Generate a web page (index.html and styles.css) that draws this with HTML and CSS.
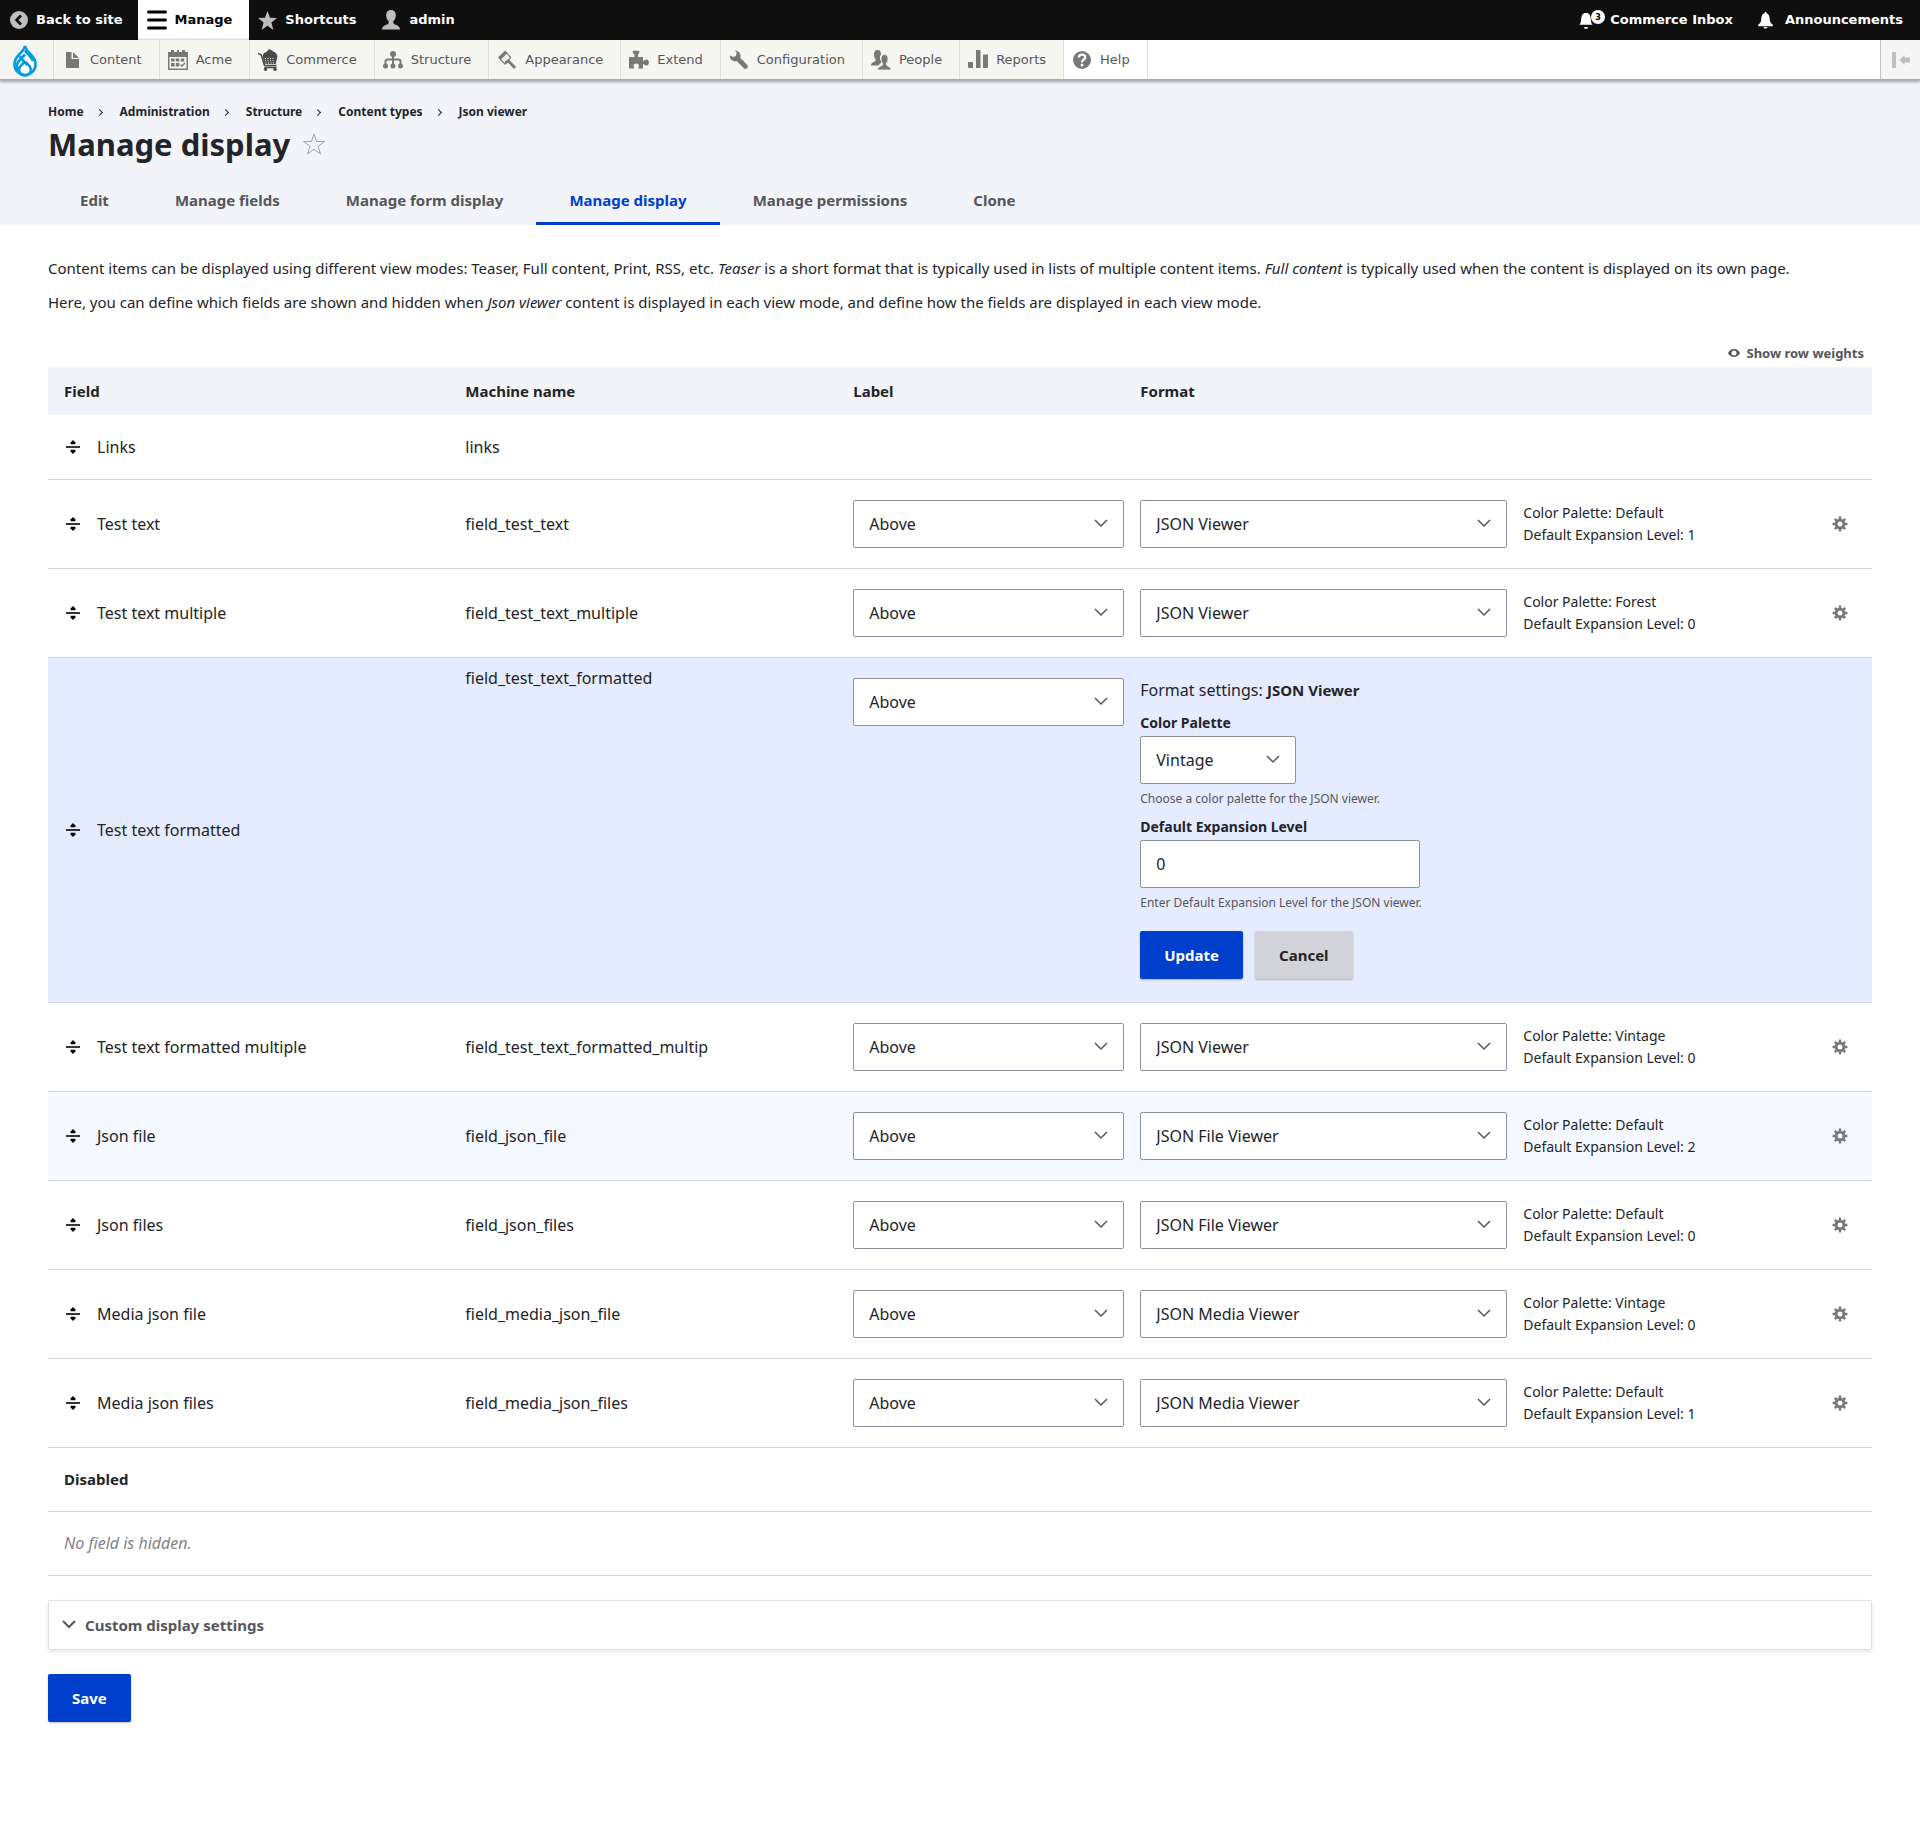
FILE: index.html
```html
<!DOCTYPE html>
<html lang="en">
<head>
<meta charset="utf-8">
<title>Manage display</title>
<link rel="stylesheet" href="styles.css">
</head>
<body>
<svg class="sprite" aria-hidden="true">
  <symbol id="drag" viewBox="0 0 14 14"><path d="M7 0l3.200 3.200h-1v1H4.800v-1h-1zM7 14l3.200-3.200h-1v-1H4.800v1h-1z" fill="#000"/><path d="M0 7h14" stroke="#333" stroke-width="2"/></symbol>
  <symbol id="gear" viewBox="0 0 16 16"><g stroke="#76777b" stroke-width="2.400"><path d="M8 .6v3M8 12.400v3M.6 8h3M12.400 8h3M2.800 2.800l2 2M11.200 11.200l2 2M2.800 13.200l2-2M11.200 4.800l2-2"/></g><circle cx="8" cy="8" r="3.900" fill="none" stroke="#76777b" stroke-width="2.800"/></symbol>
</svg>

<nav class="bar" aria-label="Toolbar">
  <a class="bar-item back" href="#"><svg width="18" height="18" viewBox="0 0 18 18"><circle cx="9" cy="9" r="9" fill="#bebebe"/><path d="M11 4.500L6.500 9l4.500 4.500" fill="none" stroke="#0f0f0f" stroke-width="2.600"/></svg>Back to site</a>
  <a class="bar-item manage" href="#"><svg width="20" height="20" viewBox="0 0 20 20"><path d="M1.500 2h17M1.500 10h17M1.500 18h17" stroke="#000" stroke-width="3" stroke-linecap="round"/></svg>Manage</a>
  <a class="bar-item" href="#"><svg width="19" height="19" viewBox="0 0 19 19"><path d="M9.500 0l2.500 6.800 7 .2-5.600 4.400L15.400 19l-5.900-4.200L3.600 19l2-7.600L0 7l7-.2z" fill="#bebebe"/></svg>Shortcuts</a>
  <a class="bar-item" href="#"><svg width="20" height="20" viewBox="0 0 20 20"><path d="M10 0c3.400 0 4.800 2.300 4.800 5.400 0 2.700-1 4.300-2.200 5.600-.7.900-.5 2.400.5 2.900 2 1 5.900 1.900 5.900 5.600H1c0-3.700 3.900-4.600 5.900-5.600 1-.5 1.200-2 .5-2.900C6.200 9.700 5.200 8.100 5.200 5.400 5.200 2.300 6.600 0 10 0z" fill="#bebebe"/></svg>admin</a>
  <a class="bar-item inbox" href="#"><svg width="26" height="20" viewBox="0 0 26 20"><path d="M7 3c3.500 0 4.600 2.700 4.800 6 .1 3 .6 4.300 1.800 5.800H.4C1.600 13.300 2 12 2.200 9 2.400 5.700 3.500 3 7 3zM5 17h4a2 2 0 0 1-4 0z" fill="#fff"/><circle cx="19" cy="7" r="7" fill="#fff"/><text x="19" y="10" class="badge">3</text></svg>Commerce Inbox</a>
  <a class="bar-item announce" href="#"><svg width="15" height="17" viewBox="0 0 15 17"><path d="M7.500 0c.8 0 1 .6 1 1.300 2.400.8 3 2.700 3.200 5.200.2 3.300.6 4.700 3.100 6.200v1.600H.2v-1.600c2.500-1.500 2.900-2.900 3.100-6.200.2-2.500.8-4.400 3.200-5.200 0-.7.200-1.300 1-1.300zM5.500 15h4c-.3 1-1 1.500-2 1.500s-1.700-.5-2-1.500z" fill="#fff"/></svg>Announcements</a>
</nav>

<nav class="tray" aria-label="Administration menu">
  <a class="logo" href="#" aria-label="Drupal"><svg width="24" height="32" viewBox="0 0 24 32"><path d="M12 1C11 5 8.500 7.300 5.800 10 3 12.700 1.500 15.400 1.500 19.500a10.500 10.500 0 0 0 21 0c0-4.100-1.500-6.800-4.300-9.500C15.500 7.300 13 5 12 1z" fill="#fff" stroke="#009cde" stroke-width="2.600"/><path d="M6.500 11.500l8 8.500M12 9.500l-7 7.500c-2 3.500-1 7 1.500 9.500M11.500 16.800L6.800 22a5.800 5.800 0 1 0 9.900-.6l-4-4.400M12 5.500c1.500 2.500 6.500 6.500 8 10.500" fill="none" stroke="#009cde" stroke-width="2.600"/></svg></a>
  <a class="tab" href="#"><svg width="20" height="20" viewBox="0 0 20 20"><path d="M4 2h5.500v7H17v9H4zM11 2l6 6h-6z"/></svg>Content</a>
  <a class="tab" href="#"><svg width="20" height="20" viewBox="0 0 20 20"><path d="M0 2h3V0h3v2h3V0h2v2h3V0h3v2h3v18H0zm1.500 5v11.500h17V7zM3 8.500h3.500v3H3zm4.800 0h3.500v3H7.800zm5 0h3.500v3h-3.500zM3 13h3.500v3.500H3zm4.800 0h3.500v3.500H7.800z" fill-rule="evenodd"/><path d="M12.500 14.500l1.500 1.500 3-3" fill="none" stroke="#787878" stroke-width="1.500"/></svg>Acme</a>
  <a class="tab" href="#"><svg class="dark" width="20" height="22" viewBox="0 0 20 22"><path d="M4.500 7L6 4l2.500-1L11 0l2 1 2.500 1.500L18 4l1.500 3-1.800 8H6.500z"/><path d="M0 4.500l3.200 1.200L6.500 16.500H18.500M6.500 18.500h12" fill="none" stroke="#4a4a4a" stroke-width="1.500"/><circle cx="7.500" cy="20.200" r="1.700"/><circle cx="17" cy="20.200" r="1.700"/><path d="M7 9h1v1H7zm2.500 0h1v1h-1zm2.500 0h1v1h-1zm2.500 0h1v1h-1zM7 11.200h1v1H7zm2.500 0h1v1h-1zm2.500 0h1v1h-1zm2.500 0h1v1h-1zM7.500 13.400h1v1h-1zm2.500 0h1v1h-1zm2.500 0h1v1h-1zm2.500 0h1v1h-1z" fill="#f5f5f2"/></svg>Commerce</a>
  <a class="tab" href="#"><svg width="20" height="20" viewBox="0 0 20 20"><circle cx="10" cy="4" r="3"/><circle cx="2.500" cy="16" r="2.500"/><circle cx="10" cy="16" r="2.500"/><circle cx="17.500" cy="16" r="2.500"/><path d="M10 5v10M2.500 16v-4.500q0-2 2-2h11q2 0 2 2V16" fill="none" stroke="#787878" stroke-width="2"/></svg>Structure</a>
  <a class="tab" href="#"><svg width="20" height="20" viewBox="0 0 20 20"><path d="M1 7.500L8 .5 10.500 3 3.500 10z"/><path d="M3 9l5 5 5.500-6.500L9.500 2.500" fill="none" stroke="#787878" stroke-width="1.200"/><path d="M8.500 12.500l3-1.500 6.500 7" fill="none" stroke="#787878" stroke-width="2.800"/></svg>Appearance</a>
  <a class="tab" href="#"><svg width="20" height="20" viewBox="0 0 20 20"><path d="M0 7h5.500V4.500C3.500 3.500 3.500 1 4 .8h6C10.600 1 10.500 3.500 9 4.500V7h5v4c1-.3 1.500-1.500 3.500-1.500 3.300 0 3.300 6 0 6-2 0-2.500-1.200-3.500-1.500v4.500H9.500c-.5-1.200.5-1.700.5-3 0-2.700-5.500-2.700-5.500 0 0 1.300 1 1.800.5 3H0z"/></svg>Extend</a>
  <a class="tab" href="#"><svg width="20" height="20" viewBox="0 0 20 20"><path d="M8 8l8.500 8.500" stroke="#787878" stroke-width="4.600" stroke-linecap="round"/><circle cx="6.200" cy="6" r="5.400"/><path d="M-1 1.500L2 -1l3 0 2.500 3.500-.5 3.500-3 1L0 5z" fill="#f5f5f2"/></svg>Configuration</a>
  <a class="tab" href="#"><svg width="20" height="20" viewBox="0 0 20 20"><path d="M6.500 0c2.600 0 3.500 2 3.500 4.500C8.500 6 8.500 9 10 11c.8 1 .5 1.500-.5 2.200-1 .6-1.500 1.500-1.800 2.300H0c0-3 2.500-3.200 4-4 .8-.5.800-1.800.3-2.500C3.300 7.800 3 6.300 3 4.500 3 2 4 0 6.500 0z"/><path d="M13.500 4.500c2.600 0 3.500 2 3.500 4.500 0 1.800-.5 3-1.300 4.200-.5.700-.3 2 .3 2.300 1.500.8 4 1.500 4 4.500H6.500c0-3 3-3.700 4.500-4.500.6-.3.800-1.600.3-2.300C10.500 12 10 10.800 10 9c0-2.500 1-4.500 3.500-4.500z" stroke="#f5f5f2" stroke-width=".8"/></svg>People</a>
  <a class="tab" href="#"><svg width="20" height="20" viewBox="0 0 20 20"><path d="M0 12h5v6H1q-1 0-1-1zM8 0h4.500v18H8zM15 4.500h5V17q0 1-1 1h-4z"/></svg>Reports</a>
  <a class="tab help" href="#"><svg width="20" height="20" viewBox="0 0 20 20"><circle cx="10" cy="10" r="9"/><path d="M6.800 7.500C7 3.500 13.500 3.800 13.200 7.500 13 9.700 10 9.800 10 12.200" fill="none" stroke="#fff" stroke-width="2.300"/><circle cx="10" cy="15" r="1.500" fill="#fff"/></svg>Help</a>
  <button class="orient" type="button" aria-label="Vertical orientation"><svg width="18" height="16" viewBox="0 0 18 16"><path d="M0 0h4v16H0zM7.500 8l5-5v2.500H18v5h-5.500V13z" fill="#bebebe"/></svg></button>
</nav>

<header class="head">
  <nav class="crumbs" aria-label="Breadcrumb">
    <a href="#">Home</a><i></i><a href="#">Administration</a><i></i><a href="#">Structure</a><i></i><a href="#">Content types</a><i></i><a href="#">Json viewer</a>
  </nav>
  <div class="title"><h1>Manage display</h1><a href="#" aria-label="Add to shortcuts"><svg width="24" height="24" viewBox="0 0 24 24"><path d="M12 2l2.500 7.500h8l-6.500 4.800 2.500 7.700-6.500-4.800L5.500 22 8 14.300 1.500 9.500h8z" fill="none" stroke="#a0a1a6"/></svg></a></div>
  <nav class="tabs" aria-label="Primary tabs">
    <a href="#">Edit</a><a href="#">Manage fields</a><a href="#">Manage form display</a><a class="active" href="#">Manage display</a><a href="#">Manage permissions</a><a href="#">Clone</a>
  </nav>
</header>

<main class="main">
  <p class="intro">Content items can be displayed using different view modes: Teaser, Full content, Print, RSS, etc. <em>Teaser</em> is a short format that is typically used in lists of multiple content items. <em>Full content</em> is typically used when the content is displayed on its own page. Here, you can define which fields are shown and hidden when <em>Json viewer</em> content is displayed in each view mode, and define how the fields are displayed in each view mode.</p>
  <div class="weights"><button type="button"><svg width="12" height="8" viewBox="0 0 12 8"><path d="M6 0c3 0 5 1.800 6 4-1 2.200-3 4-6 4S1 6.200 0 4c1-2.200 3-4 6-4zm0 1.500a2.500 2.500 0 1 0 0 5 2.500 2.500 0 0 0 0-5z" fill="#55565b" fill-rule="evenodd"/></svg>Show row weights</button></div>
  <table class="fields">
    <colgroup><col class="c1"><col class="c2"><col class="c3"><col class="c4"><col class="c5"><col class="c6"></colgroup>
    <thead><tr><th scope="col">Field</th><th scope="col">Machine name</th><th scope="col">Label</th><th scope="col" colspan="3">Format</th></tr></thead>
    <tbody>
      <tr class="short"><td><span class="name"><svg width="14" height="14"><use href="#drag"/></svg>Links</span></td><td>links</td><td></td><td></td><td></td><td></td></tr>
      <tr><td><span class="name"><svg width="14" height="14"><use href="#drag"/></svg>Test text</span></td><td>field_test_text</td><td><select aria-label="Label for Test text"><option>Above</option></select></td><td><select aria-label="Format for Test text"><option>JSON Viewer</option></select></td><td class="sum">Color Palette: Default<br>Default Expansion Level: 1</td><td><button class="cog" type="button" aria-label="Edit"><svg width="16" height="16"><use href="#gear"/></svg></button></td></tr>
      <tr><td><span class="name"><svg width="14" height="14"><use href="#drag"/></svg>Test text multiple</span></td><td>field_test_text_multiple</td><td><select aria-label="Label for Test text multiple"><option>Above</option></select></td><td><select aria-label="Format for Test text multiple"><option>JSON Viewer</option></select></td><td class="sum">Color Palette: Forest<br>Default Expansion Level: 0</td><td><button class="cog" type="button" aria-label="Edit"><svg width="16" height="16"><use href="#gear"/></svg></button></td></tr>
      <tr class="editing"><td><span class="name"><svg width="14" height="14"><use href="#drag"/></svg>Test text formatted</span></td><td class="top">field_test_text_formatted</td><td class="top select-top"><select aria-label="Label for Test text formatted"><option>Above</option></select></td>
        <td colspan="3" class="top">
          <div class="settings">
            <div class="settings-title">Format settings: <strong>JSON Viewer</strong></div>
            <label for="palette">Color Palette</label>
            <select id="palette" class="palette"><option>Vintage</option></select>
            <div class="hint">Choose a color palette for the JSON viewer.</div>
            <label for="level">Default Expansion Level</label>
            <input id="level" type="text" value="0">
            <div class="hint">Enter Default Expansion Level for the JSON viewer.</div>
            <div class="actions"><button class="btn primary" type="button">Update</button><button class="btn" type="button">Cancel</button></div>
          </div>
        </td></tr>
      <tr><td><span class="name"><svg width="14" height="14"><use href="#drag"/></svg>Test text formatted multiple</span></td><td>field_test_text_formatted_multip</td><td><select aria-label="Label for Test text formatted multiple"><option>Above</option></select></td><td><select aria-label="Format for Test text formatted multiple"><option>JSON Viewer</option></select></td><td class="sum">Color Palette: Vintage<br>Default Expansion Level: 0</td><td><button class="cog" type="button" aria-label="Edit"><svg width="16" height="16"><use href="#gear"/></svg></button></td></tr>
      <tr class="hover"><td><span class="name"><svg width="14" height="14"><use href="#drag"/></svg>Json file</span></td><td>field_json_file</td><td><select aria-label="Label for Json file"><option>Above</option></select></td><td><select aria-label="Format for Json file"><option>JSON File Viewer</option></select></td><td class="sum">Color Palette: Default<br>Default Expansion Level: 2</td><td><button class="cog" type="button" aria-label="Edit"><svg width="16" height="16"><use href="#gear"/></svg></button></td></tr>
      <tr><td><span class="name"><svg width="14" height="14"><use href="#drag"/></svg>Json files</span></td><td>field_json_files</td><td><select aria-label="Label for Json files"><option>Above</option></select></td><td><select aria-label="Format for Json files"><option>JSON File Viewer</option></select></td><td class="sum">Color Palette: Default<br>Default Expansion Level: 0</td><td><button class="cog" type="button" aria-label="Edit"><svg width="16" height="16"><use href="#gear"/></svg></button></td></tr>
      <tr><td><span class="name"><svg width="14" height="14"><use href="#drag"/></svg>Media json file</span></td><td>field_media_json_file</td><td><select aria-label="Label for Media json file"><option>Above</option></select></td><td><select aria-label="Format for Media json file"><option>JSON Media Viewer</option></select></td><td class="sum">Color Palette: Vintage<br>Default Expansion Level: 0</td><td><button class="cog" type="button" aria-label="Edit"><svg width="16" height="16"><use href="#gear"/></svg></button></td></tr>
      <tr><td><span class="name"><svg width="14" height="14"><use href="#drag"/></svg>Media json files</span></td><td>field_media_json_files</td><td><select aria-label="Label for Media json files"><option>Above</option></select></td><td><select aria-label="Format for Media json files"><option>JSON Media Viewer</option></select></td><td class="sum">Color Palette: Default<br>Default Expansion Level: 1</td><td><button class="cog" type="button" aria-label="Edit"><svg width="16" height="16"><use href="#gear"/></svg></button></td></tr>
      <tr class="short region"><td colspan="6">Disabled</td></tr>
      <tr class="short empty"><td colspan="6">No field is hidden.</td></tr>
    </tbody>
  </table>
  <details class="custom"><summary><svg width="14" height="9" viewBox="0 0 14 9"><path d="M1 1l6 6 6-6" fill="none" stroke="#55565b" stroke-width="2"/></svg>Custom display settings</summary></details>
  <button class="btn primary" type="submit">Save</button>
</main>
</body>
</html>
```
FILE: styles.css
```css
* { box-sizing: border-box; }
body { margin: 0; background: #fff; color: #232429; font: 15px/24px "Noto Sans", sans-serif; }
a { color: inherit; text-decoration: none; }
svg { flex: none; }
.sprite { display: none; }

.bar { display: flex; height: 40px; background: #0f0f0f; color: #fff; font: bold 13px/40px "DejaVu Sans", sans-serif; }
.bar-item { display: flex; align-items: center; gap: 8px; padding: 0 16px 0 9px; }
.back { padding-left: 10px; }
.manage { gap: 7px; padding-right: 17px; background: #fff; color: #000; }
.inbox { margin-left: auto; gap: 5px; }
.announce { gap: 12px; padding-right: 17px; }
.badge { font: bold 8px "DejaVu Sans", sans-serif; fill: #000; text-anchor: middle; }

.tray { position: relative; display: flex; height: 40px; background: #fff; border-bottom: 1px solid #aaa; box-shadow: 0 1px 3px 1px rgba(0, 0, 0, .33); color: #565656; font: 13px/40px "DejaVu Sans", sans-serif; }
.tray svg { fill: #787878; }
.tray .dark { fill: #4a4a4a; }
.logo, .tab { display: flex; align-items: center; background: #f5f5f2; border-right: 1px solid #ddd; }
.logo { width: 54px; padding: 2px 0 0 13px; }
.tab { gap: 8px; padding: 0 17px 0 8px; }
.tray .help { background: #fff; }
.orient { margin-left: auto; width: 40px; padding: 0; border: 0; border-left: 1px solid #c0c0c0; background: #f5f5f5; display: flex; align-items: center; justify-content: center; }

.head { background: #f3f4f9; padding: 20px 48px 0; }
.crumbs { display: flex; align-items: center; height: 24px; font-size: 12px; font-weight: bold; }
.crumbs i { width: 5px; height: 5px; margin: 0 18px 0 13px; border: solid #232429; border-width: 1px 1px 0 0; transform: rotate(45deg); }
.title { display: flex; align-items: center; gap: 12px; height: 40px; }
h1 { margin: 0; font-size: 31px; line-height: 40px; }
.title a { display: flex; }
.tabs { display: flex; margin-top: 12px; }
.tabs a { height: 49px; padding: 0 33px; line-height: 48px; font-weight: bold; color: #55565b; border-bottom: 3px solid transparent; }
.tabs a:first-child { padding-left: 32px; }
.tabs .active { color: #003ecc; border-color: #003ecc; }

.main { padding: 26px 48px 98px; }
.intro { margin: 0; padding-right: 48px; line-height: 34px; }
.weights { display: flex; justify-content: flex-end; margin-top: 22px; padding-right: 8px; }
.weights button { display: flex; align-items: center; gap: 6px; height: 26px; padding: 0 0 2px; border: 0; background: none; font: bold 13px/24px "Noto Sans", sans-serif; color: #55565b; }

.fields { width: 100%; border-collapse: collapse; table-layout: fixed; }
.c1 { width: 22%; }
.c2 { width: 388px; }
.c3 { width: 287px; }
.c4 { width: 21%; }
.c6 { width: 64px; }
th { height: 48px; padding: 0 16px; background: #f3f4f9; text-align: left; }
td { height: 89px; padding: 0 0 0 16px; border-bottom: 1px solid #d3d4d9; font-size: 16px; }
.short td { height: 64px; }
.name { display: flex; align-items: center; gap: 17px; padding-left: 2px; }
.top { vertical-align: top; padding-top: 8px; }
.select-top { padding-top: 20px; }
.editing { background: #e6ecff; }
.hover { background: #f5f8ff; }
.sum { font-size: 14px; line-height: 22px; }
.region td { font-size: 15px; font-weight: bold; }
.empty { font-style: italic; color: #828388; }
.cog { display: flex; padding: 8px; border: 0; background: none; }

select, input { display: block; width: 100%; height: 48px; padding: 0 15px; border: 1px solid #8e929c; border-radius: 2px; background: #fff; color: #232429; font: 16px/24px "Noto Sans", sans-serif; }
select { appearance: none; background: #fff url("data:image/svg+xml,%3Csvg xmlns='http://www.w3.org/2000/svg' width='14' height='9'%3E%3Cpath d='M1 1l6 6 6-6' fill='none' stroke='%2355565b' stroke-width='1.500'/%3E%3C/svg%3E") no-repeat right 15px center; }
.settings { padding-top: 12px; }
.settings-title { padding-bottom: 2px; }
.settings strong { font-size: 15px; }
.settings label { display: block; margin-top: 10px; font-size: 14px; line-height: 18px; font-weight: bold; }
.settings select, .settings input { margin-top: 4px; }
.settings .palette { width: 156px; }
.settings input { width: 280px; }
.hint { margin-top: 6px; font-size: 12px; line-height: 18px; color: #55565b; }
.actions { display: flex; gap: 12px; margin: 19px 0 23px; }
.btn { height: 48px; padding: 0 24px; border: 0; border-radius: 2px; background: #d3d4d9; color: #232429; font: bold 15px/48px "Noto Sans", sans-serif; box-shadow: 0 1px 2px rgba(0, 0, 0, .25); }
.primary { background: #003ecc; color: #fff; }
.custom { margin: 24px 0; border: 1px solid #dedfe4; border-radius: 2px; box-shadow: 0 2px 4px rgba(0, 0, 0, .1); }
.custom summary { display: flex; align-items: center; gap: 9px; height: 48px; padding-left: 13px; font-weight: bold; color: #55565b; }
```
